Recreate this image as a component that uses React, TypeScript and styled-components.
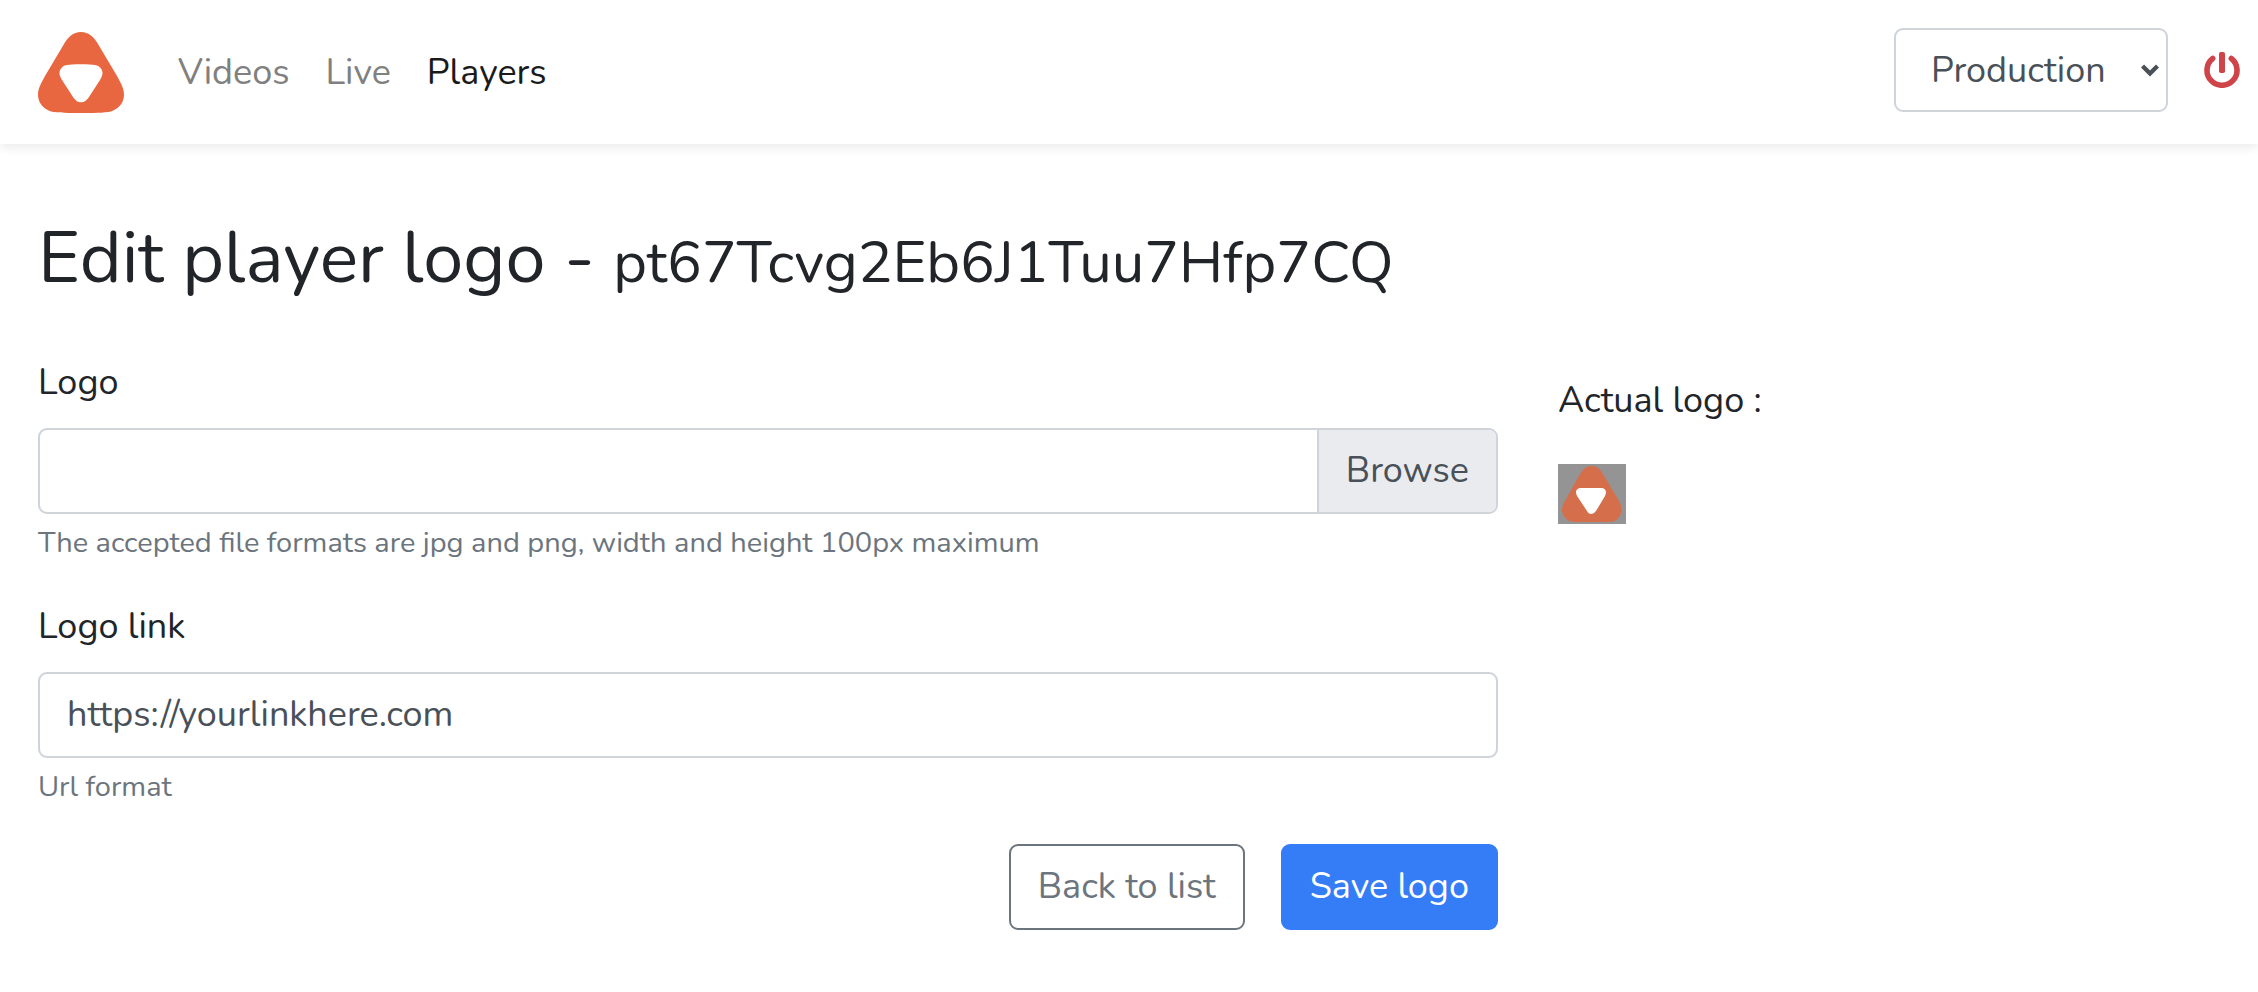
import React, { useState } from "react";
import styled, { createGlobalStyle } from "styled-components";

const GlobalStyle = createGlobalStyle`
  *, *::before, *::after { box-sizing: border-box; }
  body {
    margin: 0;
    background: #fff;
    color: #212529;
    font-family: Nunito, Lato, "Noto Sans", sans-serif;
    font-size: 36px;
    line-height: 58px;
  }
  button, input, select { font: inherit; }
`;

const Header = styled.header`
  display: flex;
  align-items: center;
  min-height: 144px;
  padding: 2px 18px 0 38px;
  background: #fff;
  box-shadow: 0 4px 9px rgba(0, 0, 0, 0.075);
`;

const Brand = styled.a`
  display: flex;
  margin-right: 54px;
`;

const Nav = styled.nav`
  display: flex;
  flex: 1;
  gap: 36px;
`;

const NavLink = styled.a<{ $active?: boolean }>`
  color: ${(p) => (p.$active ? "#1a1a1a" : "#808080")};
  text-decoration: none;
`;

const Tools = styled.div`
  display: flex;
  align-items: center;
  gap: 36px;
  padding-bottom: 6px;
`;

const SelectWrap = styled.div`
  position: relative;
  display: flex;
  width: 274px;
`;

const Select = styled.select`
  width: 100%;
  height: 84px;
  padding: 2px 54px 0 35px;
  border: 2px solid #ced4da;
  border-radius: 9px;
  background: #fff;
  color: #495057;
  appearance: none;
`;

const Chevron = styled.svg`
  position: absolute;
  top: 36px;
  right: 9px;
  pointer-events: none;
`;

const IconButton = styled.button`
  display: flex;
  padding: 0;
  border: 0;
  background: none;
  cursor: pointer;
`;

const Main = styled.main`
  padding: 72px 0 58px 38px;
`;

const Title = styled.h1`
  margin: 0 0 54px;
  font-size: 72px;
  font-weight: 400;
  line-height: 84px;
`;

const PlayerId = styled.small`
  font-size: 58px;
  line-height: 58px;
`;

const Columns = styled.div`
  display: grid;
  grid-template-columns: 73fr 35fr;
  gap: 60px;
`;

const Field = styled.div`
  display: flex;
  flex-direction: column;
  margin-bottom: 32px;
`;

const Label = styled.label`
  margin-bottom: 16px;
`;

const TextInput = styled.input`
  width: 100%;
  height: 86px;
  padding: 0 27px 2px;
  border: 2px solid #ced4da;
  border-radius: 9px;
  background: #fff;
  color: #495057;
`;

const FileBox = styled.label`
  display: flex;
  justify-content: flex-end;
  height: 86px;
  border: 2px solid #ced4da;
  border-radius: 9px;
  overflow: hidden;
  cursor: pointer;
`;

const HiddenFile = styled.input`
  position: absolute;
  width: 1px;
  height: 1px;
  opacity: 0;
`;

const FileName = styled.span`
  flex: 1;
  padding: 12px 27px;
  color: #495057;
`;

const Browse = styled.span`
  padding: 12px 27px;
  border-left: 2px solid #ced4da;
  background: #e9ebef;
  color: #495057;
`;

const Help = styled.small`
  margin-top: 6px;
  color: #6c757d;
  font-size: 29px;
  line-height: 46px;
`;

const Actions = styled.div`
  display: flex;
  justify-content: flex-end;
  gap: 36px;
  padding-top: 2px;
`;

const Button = styled.button<{ $primary?: boolean }>`
  height: 86px;
  padding: 0 27px;
  border: 2px solid ${(p) => (p.$primary ? "#357cf7" : "#6c757d")};
  border-radius: 9px;
  background: ${(p) => (p.$primary ? "#357cf7" : "#fff")};
  color: ${(p) => (p.$primary ? "#fff" : "#6c757d")};
  cursor: pointer;
`;

const Preview = styled.section`
  display: flex;
  flex-direction: column;
  align-items: flex-start;
  gap: 34px;
  padding-top: 18px;
`;

const OUTER =
  "M43 0C51 0 56 5 60 12L79 44C84 53 86 57 86 63C86 70 81 77 73 79.5C66 81 54 81 43 81C32 81 20 81 13 79.5C5 77 0 70 0 63C0 57 2 53 7 44L26 12C30 5 35 0 43 0Z";
const INNER =
  "M43 32.3C57 32.3 60 33 62.5 36C65.500 39.500 65 43 62 48L51 65C48 69 46 70.300 43 70.300C40 70.300 38 69 35 65L24 48C21 43 20.500 39.500 23.500 36C26 33 29 32.300 43 32.300Z";

function BrandLogo() {
  return (
    <svg width="86" height="82" viewBox="0 0 86 82" aria-hidden="true">
      <path d={OUTER} fill="#e86740" />
      <path d={INNER} fill="#fff" />
    </svg>
  );
}

function LogoPreview() {
  return (
    <svg width="68" height="60" viewBox="0 0 68 60" role="img" aria-label="Actual logo">
      <rect width="68" height="60" fill="#949494" />
      <path d="M34 2C39 2 42 5 45 10L61 37C64 43 64 46 63 49C61 55 57 58 51 58H17C11 58 7 55 5 50C3 46 4 42 7 37L22 10C26 4 29 2 34 2Z" fill="#d56e4a" />
      <path d="M23 24H43C48 24 49 28 47 32L38 47C35 51 31 51 29 47L19 32C17 28 18 24 23 24Z" fill="#fff" />
    </svg>
  );
}

export default function App() {
  const [link, setLink] = useState("https://yourlinkhere.com");
  const [file, setFile] = useState("");

  return (
    <>
      <GlobalStyle />
      <Header>
        <Brand href="#" aria-label="Home">
          <BrandLogo />
        </Brand>
        <Nav>
          <NavLink href="#videos">Videos</NavLink>
          <NavLink href="#live">Live</NavLink>
          <NavLink href="#players" $active>Players</NavLink>
        </Nav>
        <Tools>
          <SelectWrap>
            <Select aria-label="Environment" defaultValue="Production">
              <option>Production</option>
              <option>Sandbox</option>
            </Select>
            <Chevron width="18" height="13" viewBox="0 0 18 13" aria-hidden="true">
              <path d="M1.500 2L9 9.500L16.500 2" fill="none" stroke="#495057" strokeWidth="4.400" />
            </Chevron>
          </SelectWrap>
          <IconButton type="button" aria-label="Log out">
            <svg width="36" height="36" viewBox="0 0 36 36" aria-hidden="true">
              <path d="M8.700 6.500A15 15 0 1 0 27.300 6.500" fill="none" stroke="#cf4448" strokeWidth="5.600" strokeLinecap="round" />
              <rect x="15" y="0" width="6" height="21" rx="1.800" fill="#cf4448" />
            </svg>
          </IconButton>
        </Tools>
      </Header>
      <Main>
        <Title>
          Edit player logo - <PlayerId>pt67Tcvg2Eb6J1Tuu7Hfp7CQ</PlayerId>
        </Title>
        <Columns>
          <form onSubmit={(e) => e.preventDefault()}>
            <Field>
              <Label htmlFor="logo">Logo</Label>
              <FileBox>
                <HiddenFile
                  id="logo"
                  type="file"
                  accept="image/png,image/jpeg"
                  onChange={(e) => setFile(e.target.files?.[0]?.name ?? "")}
                />
                <FileName>{file}</FileName>
                <Browse>Browse</Browse>
              </FileBox>
              <Help>The accepted file formats are jpg and png, width and height 100px maximum</Help>
            </Field>
            <Field>
              <Label htmlFor="link">Logo link</Label>
              <TextInput id="link" type="text" value={link} onChange={(e) => setLink(e.target.value)} />
              <Help>Url format</Help>
            </Field>
            <Actions>
              <Button type="button">Back to list</Button>
              <Button type="submit" $primary>Save logo</Button>
            </Actions>
          </form>
          <Preview>
            <span>Actual logo :</span>
            <LogoPreview />
          </Preview>
        </Columns>
      </Main>
    </>
  );
}
